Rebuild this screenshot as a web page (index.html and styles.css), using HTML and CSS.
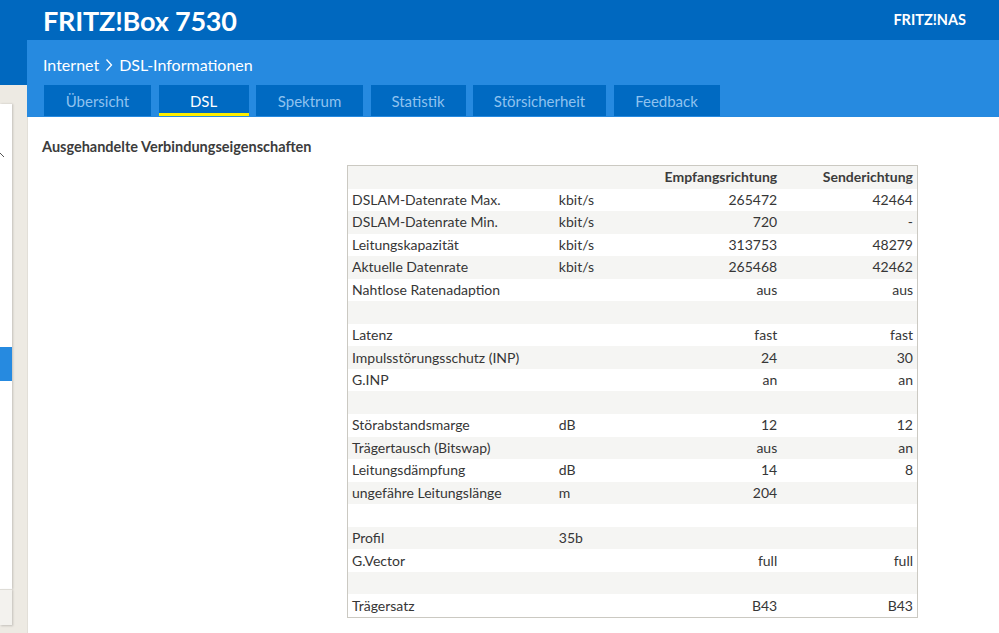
FILE: index.html
```html
<!DOCTYPE html>
<html lang="de">
<head>
<meta charset="utf-8">
<title>FRITZ!Box 7530 - DSL-Informationen</title>
<link rel="stylesheet" href="styles.css">
</head>
<body>
<div class="page">
  <header class="topbar">
    <div class="brand">FRITZ!Box 7530</div>
    <div class="nas">FRITZ!NAS</div>
  </header>
  <div class="main">
    <aside class="side">
      <div class="side-top"></div>
      <div class="side-nav">
        <svg class="side-chev" width="6" height="10" viewBox="0 0 6 10"><path d="M0 1 L4 5" stroke="#555" stroke-width="1" fill="none"/></svg>
        <div class="side-active"></div>
      </div>
      <div class="side-foot"></div>
    </aside>
    <main class="content">
      <div class="subbar">
        <div class="crumbs">
          <span>Internet</span>
          <svg class="crumb-chev" width="8" height="14" viewBox="0 0 8 14"><path d="M1.5 1.5 L6.5 7 L1.5 12.5" stroke="#fff" stroke-width="1.3" fill="none"/></svg>
          <span>DSL-Informationen</span>
        </div>
        <nav class="tabs">
          <a class="tab t-uebersicht">Übersicht</a>
          <a class="tab tab-active t-dsl">DSL</a>
          <a class="tab t-spektrum">Spektrum</a>
          <a class="tab t-statistik">Statistik</a>
          <a class="tab t-stoer">Störsicherheit</a>
          <a class="tab t-feedback">Feedback</a>
        </nav>
      </div>
      <section class="panel">
        <h2 class="heading">Ausgehandelte Verbindungseigenschaften</h2>
        <table class="dsl">
          <colgroup>
            <col class="c-label"><col class="c-unit"><col class="c-down"><col class="c-up">
          </colgroup>
          <thead>
            <tr><th></th><th></th><th class="num">Empfangsrichtung</th><th class="num">Senderichtung</th></tr>
          </thead>
          <tbody>
            <tr><td>DSLAM-Datenrate Max.</td><td>kbit/s</td><td class="num">265472</td><td class="num">42464</td></tr>
            <tr><td>DSLAM-Datenrate Min.</td><td>kbit/s</td><td class="num">720</td><td class="num">-</td></tr>
            <tr><td>Leitungskapazität</td><td>kbit/s</td><td class="num">313753</td><td class="num">48279</td></tr>
            <tr><td>Aktuelle Datenrate</td><td>kbit/s</td><td class="num">265468</td><td class="num">42462</td></tr>
            <tr><td>Nahtlose Ratenadaption</td><td></td><td class="num">aus</td><td class="num">aus</td></tr>
            <tr><td></td><td></td><td></td><td></td></tr>
            <tr><td>Latenz</td><td></td><td class="num">fast</td><td class="num">fast</td></tr>
            <tr><td>Impulsstörungsschutz (INP)</td><td></td><td class="num">24</td><td class="num">30</td></tr>
            <tr><td>G.INP</td><td></td><td class="num">an</td><td class="num">an</td></tr>
            <tr><td></td><td></td><td></td><td></td></tr>
            <tr><td>Störabstandsmarge</td><td>dB</td><td class="num">12</td><td class="num">12</td></tr>
            <tr><td>Trägertausch (Bitswap)</td><td></td><td class="num">aus</td><td class="num">an</td></tr>
            <tr><td>Leitungsdämpfung</td><td>dB</td><td class="num">14</td><td class="num">8</td></tr>
            <tr><td>ungefähre Leitungslänge</td><td>m</td><td class="num">204</td><td class="num"></td></tr>
            <tr><td></td><td></td><td></td><td></td></tr>
            <tr><td>Profil</td><td>35b</td><td></td><td></td></tr>
            <tr><td>G.Vector</td><td></td><td class="num">full</td><td class="num">full</td></tr>
            <tr><td></td><td></td><td></td><td></td></tr>
            <tr><td>Trägersatz</td><td></td><td class="num">B43</td><td class="num">B43</td></tr>
          </tbody>
        </table>
      </section>
    </main>
  </div>
</div>
</body>
</html>
```
FILE: styles.css
```css
html, body {
  margin: 0;
  padding: 0;
  height: 100%;
  overflow: hidden;
}
body {
  font-family: "Lato", "Noto Sans", sans-serif;
  color: #363636;
  background: #fff;
}
.page {
  display: flex;
  flex-direction: column;
  height: 633px;
}
.topbar {
  height: 40px;
  background: #0068bf;
  display: flex;
  align-items: center;
  justify-content: space-between;
  padding: 0 33px 0 43px;
  flex: none;
}
.brand {
  color: #fff;
  font-weight: 700;
  font-size: 27px;
  letter-spacing: -0.2px;
  line-height: 1;
}
.nas {
  color: #fff;
  font-weight: 700;
  font-size: 14.5px;
  margin-top: -2px;
}
.main {
  flex: 1;
  display: flex;
  min-height: 0;
}
.side {
  width: 27px;
  flex: none;
  background: #edeae3;
  display: flex;
  flex-direction: column;
}
.side-top {
  height: 45px;
  background: #0068bf;
}
.side-nav {
  margin-top: 19px;
  width: 12px;
  height: 485px;
  background: #fff;
  box-shadow: 1px 0 2px rgba(0,0,0,0.18);
  display: flex;
  flex-direction: column;
}
.side-chev {
  margin-top: 48px;
  display: block;
}
.side-active {
  margin-top: 185px;
  height: 34px;
  background: #268ae0;
}
.side-foot {
  width: 12px;
  height: 35px;
  background: #f3f2ee;
  border-top: 1px solid #dedcd6;
  box-shadow: 1px 1px 2px rgba(0,0,0,0.18);
}
.content {
  flex: 1;
  display: flex;
  flex-direction: column;
  background: #fff;
  box-shadow: inset 1px 0 0 #e2dfd8;
}
.subbar {
  background: #268ae0;
  padding: 0 0 1px 17px;
  height: 76px;
  display: flex;
  flex-direction: column;
}
.crumbs {
  height: 45px;
  box-sizing: border-box;
  padding-top: 4px;
  display: flex;
  align-items: center;
  gap: 5px;
  color: #fff;
  font-size: 16px;
  margin-left: -1px;
}
.crumbs span { line-height: 1; }
.crumb-chev { display: block; margin: 0 1px; }
.tabs {
  display: flex;
  gap: 7.5px;
  height: 31px;
}
.tab {
  display: flex;
  align-items: center;
  justify-content: center;
  background: #006ac2;
  color: #8fc2ef;
  font-size: 15px;
  box-sizing: border-box;
  padding-top: 1px;
  text-decoration: none;
}
.t-uebersicht { width: 107px; }
.t-dsl { width: 90px; }
.t-spektrum { width: 107px; }
.t-statistik { width: 95px; }
.t-stoer { width: 133px; }
.t-feedback { width: 106px; }
.tab-active {
  color: #fff;
  box-shadow: inset 0 -3px 0 #ffee00;
}
.panel {
  padding: 0 0 0 15px;
}
.heading {
  margin: 21px 0 0 0;
  font-size: 14.5px;
  font-weight: 700;
  color: #3c3c3c;
  line-height: 18px;
}
.dsl {
  margin: 9px 0 0 305px;
  border-collapse: collapse;
  border: 1px solid #cbc9c2;
  table-layout: fixed;
  width: 571px;
  font-size: 14px;
}
.c-label { width: 207px; }
.c-unit { width: 85px; }
.c-down { width: 141px; }
.c-up { width: 136px; }
.dsl th, .dsl td {
  height: 22.55px;
  padding: 0 4px;
  text-align: left;
  white-space: nowrap;
  line-height: 16px;
}
.dsl th { font-weight: 700; color: #3c3c3c; }
.dsl .num { text-align: right; }
.dsl tbody tr:nth-child(odd) td { background: #fff; }
.dsl tbody tr:nth-child(even) td { background: #f5f5f3; }
.dsl thead tr th { background: #f5f5f3; }
```
